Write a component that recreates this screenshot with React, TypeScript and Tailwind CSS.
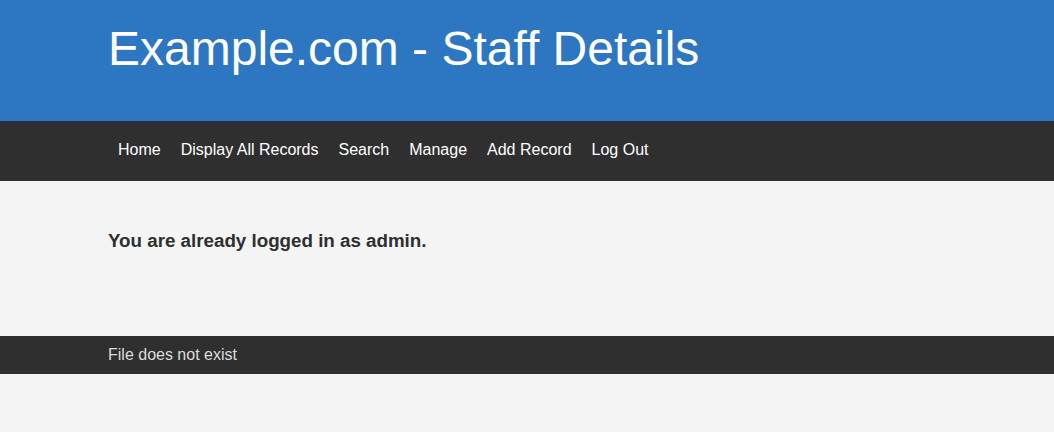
import React from 'react';

const navItems = ['Home', 'Display All Records', 'Search', 'Manage', 'Add Record', 'Log Out'];

const App = () => {
    return (
        <div className="min-h-screen bg-[#f4f4f4] font-['Liberation_Sans',Arial,sans-serif]">
            {/* Header */}
            <div className="bg-[#2c76c2] h-[121px]">
                <div className="px-[108px] pt-[21px]">
                    <h1 className="text-[48px] leading-[56px] text-white">Example.com - Staff Details</h1>
                </div>
            </div>

            {/* Nav */}
            <div className="bg-[#2f2f2f] h-[60px]">
                <ul className="px-[108px] flex items-center h-full pb-[2px]">
                    {navItems.map((item) => (
                        <li key={item}>
                            <a href="#" className="block px-[10px] text-white text-[16px] leading-[20px]">{item}</a>
                        </li>
                    ))}
                </ul>
            </div>

            {/* Content */}
            <div className="h-[155px] px-[108px] pt-[49px]">
                <p className="text-[18.75px] leading-[22px] font-bold text-[#2f2f2f]">You are already logged in as admin.</p>
            </div>

            {/* Footer */}
            <div className="bg-[#2f2f2f] h-[38px] px-[108px] flex items-center">
                <p className="text-[16px] text-[#dddddd]">File does not exist</p>
            </div>
        </div>
    );
};

export default App;
